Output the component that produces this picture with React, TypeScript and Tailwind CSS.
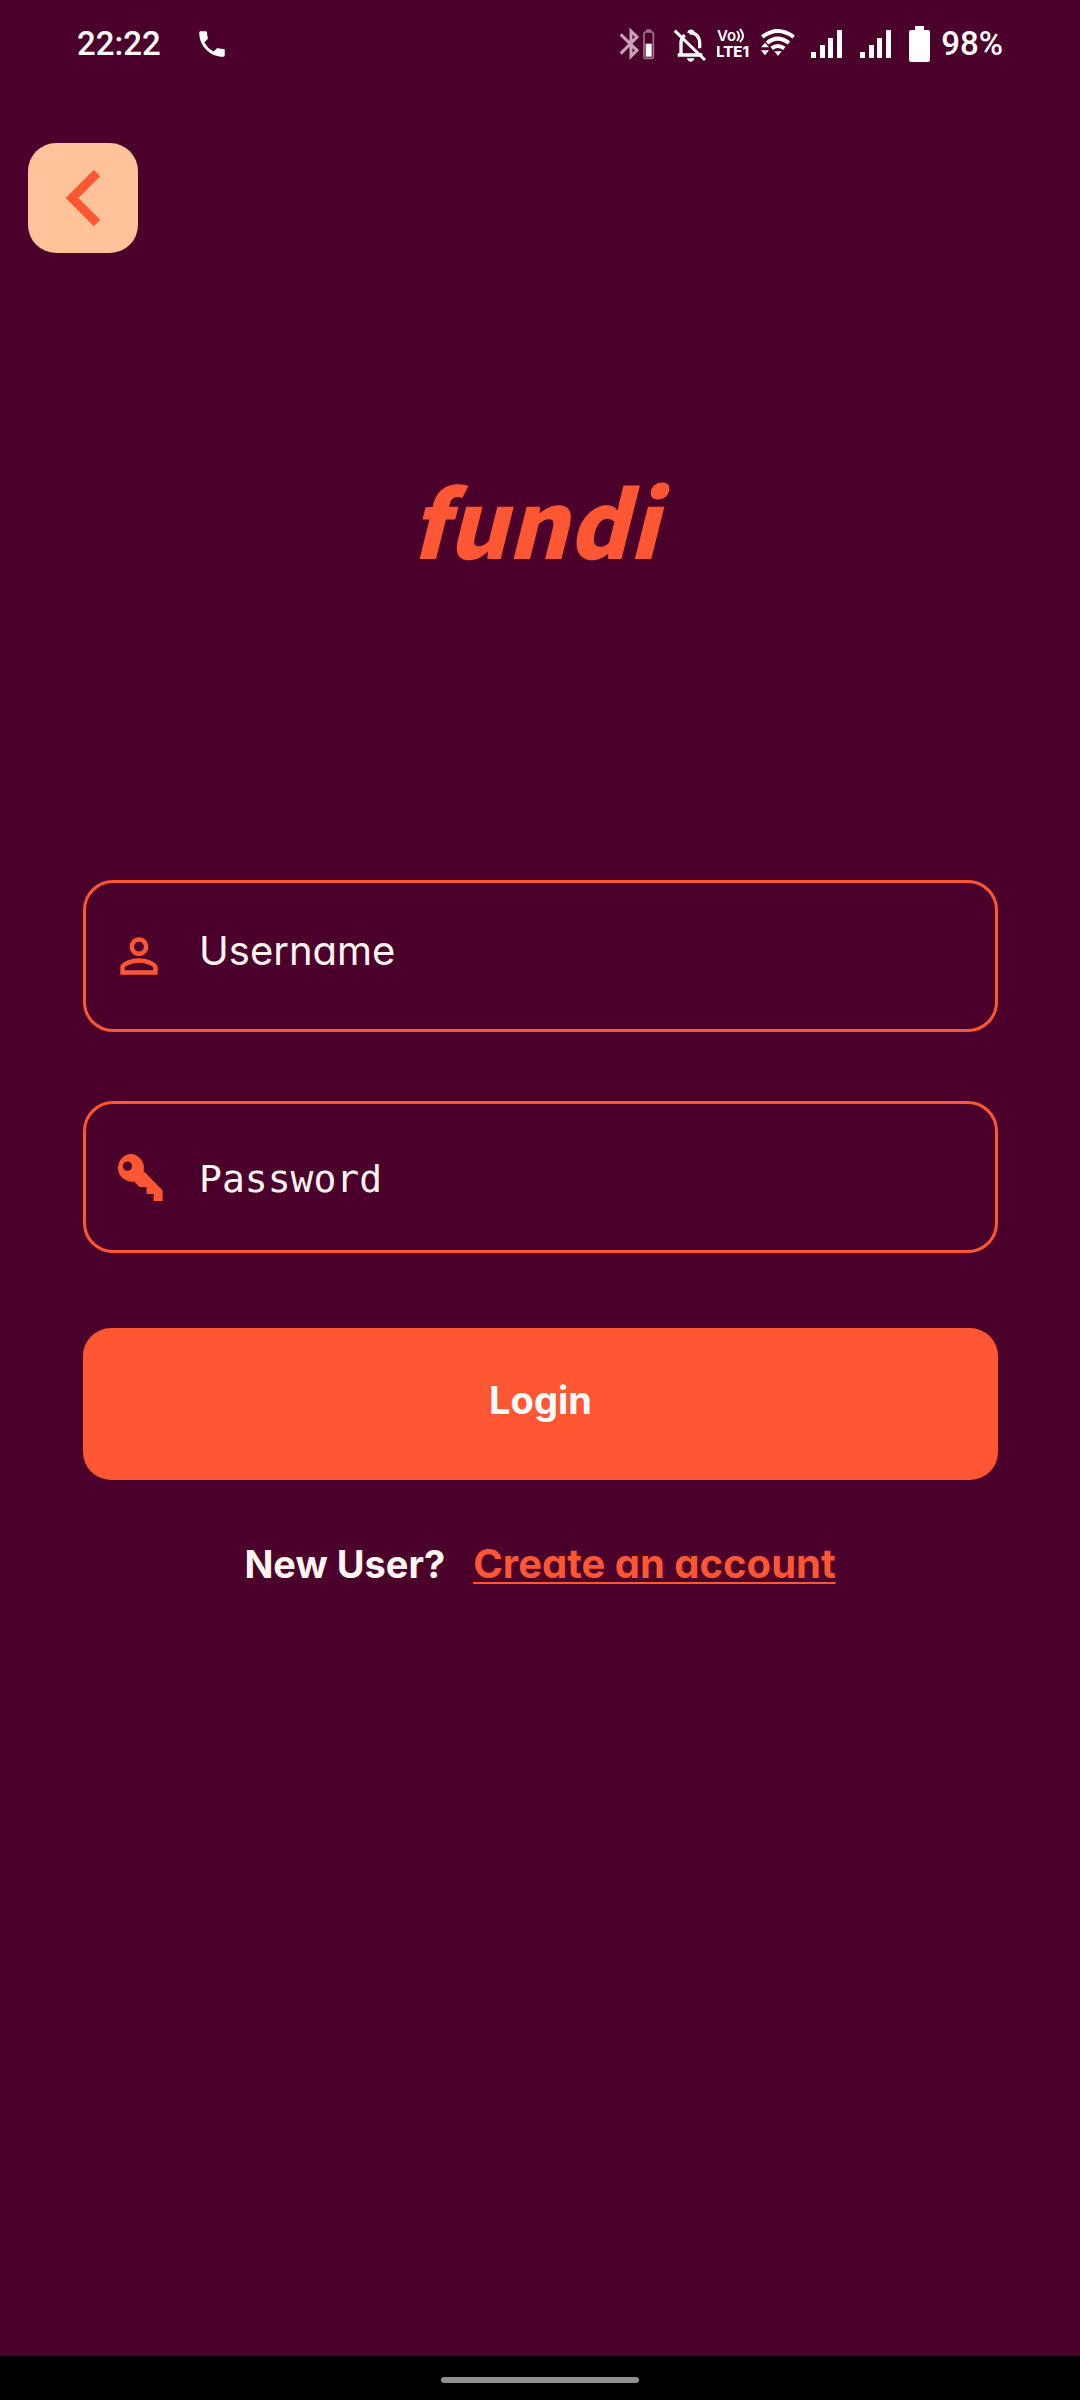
import React from "react";

const INTER = "font-['Inter',sans-serif] [font-feature-settings:'cv11']";

function StatusBar() {
  return (
    <header className="flex h-[88px] items-center px-[77px] font-['Roboto',sans-serif] text-[33px] font-medium leading-10 text-white">
      <span>22:22</span>
      <svg aria-label="Call" className="ml-[34px] h-[34px] w-[34px]" viewBox="0 0 24 24" fill="currentColor">
        <path d="M6.62 10.79c1.44 2.83 3.76 5.14 6.59 6.59l2.2-2.2c.27-.27.67-.36 1.02-.24 1.12.37 2.33.57 3.57.57.55 0 1 .45 1 1V20c0 .55-.45 1-1 1C10.61 21 3 13.39 3 4c0-.55.45-1 1-1h3.5c.55 0 1 .45 1 1 0 1.25.2 2.45.57 3.57.11.35.03.74-.25 1.02z" />
      </svg>
      <div className="ml-auto flex items-center">
        <svg aria-label="Bluetooth" className="mr-[18px] h-9 w-9" viewBox="0 0 108 108" fill="none">
          <g stroke="#c9a3ba" strokeWidth="9">
            <path d="M5 25 54 73 36 91V15L54 33 5 83" />
          </g>
          <rect x="75" y="18" width="28" height="79" rx="5" stroke="#a57490" strokeWidth="5" />
          <rect x="81" y="10" width="16" height="7" fill="#a57490" />
          <rect x="80" y="53" width="18" height="39" fill="white" />
        </svg>
        <svg aria-label="Muted" className="mr-[8px] h-9 w-9" viewBox="0 0 108 108" fill="none" stroke="white">
          <path d="M24 90V52c0-10 4-19 11-25M49 21c20-2 31 13 31 31v15M14 87H88" strokeWidth="10" />
          <path d="M43 21c0-14 22-14 22 0z" fill="white" stroke="none" />
          <path d="M42 97h22c-2 14-20 14-22 0z" fill="white" stroke="none" />
          <path d="M5 14 96 102" strokeWidth="9" />
        </svg>
        <svg aria-label="VoLTE" className="mr-[8px] h-9 w-9" viewBox="0 0 36 36" fill="white">
          <text x="0" y="15" className="font-['Inter',sans-serif] text-[15px] font-semibold">Vo</text>
          <path d="M20 5q4 5 0 10M23 3q6 7 0 13" fill="none" stroke="white" strokeWidth="2" />
          <text x="-1" y="31" className="font-['Inter',sans-serif] text-[15px] font-extrabold">LTE1</text>
        </svg>
        <svg aria-label="Wi-Fi" className="mr-[16px] h-9 w-[34px]" viewBox="0 0 102 108" fill="none" stroke="white">
          <path d="M4 33Q50 -3 98 33M18 51Q50 25 84 51" strokeWidth="12" />
          <path d="M32 67Q50 53 70 67" strokeWidth="12" />
          <path d="M0 64 12 50 24 64zM0 73 12 88 24 73zM40 76h22L51 90z" fill="white" stroke="none" />
        </svg>
        <Signal />
        <Signal />
        <svg aria-label="Battery" className="mr-[11px] h-9 w-[21px]" viewBox="0 0 21 36" fill="white">
          <path d="M6 0h9v4h4a2 2 0 0 1 2 2v28a2 2 0 0 1-2 2H2a2 2 0 0 1-2-2V6a2 2 0 0 1 2-2h4z" />
        </svg>
        <span>98%</span>
      </div>
    </header>
  );
}

function Signal() {
  return (
    <svg aria-label="Signal" className="mr-[18px] h-9 w-[31px]" viewBox="0 0 31 36" fill="white">
      <path d="M0 26h5v6H0zM9 19h5v13H9zM17 12h5v20h-5zM26 4h5v28h-5z" />
    </svg>
  );
}

function PersonIcon() {
  return (
    <svg className="h-14 w-14" viewBox="0 0 24 24" fill="currentColor" aria-hidden="true">
      <path d="M12 5.9a2.1 2.1 0 1 1 0 4.2 2.1 2.1 0 0 1 0-4.2m0 9c2.97 0 6.1 1.46 6.1 2.1v1.1H5.9V17c0-.64 3.13-2.1 6.1-2.1M12 4C9.79 4 8 5.79 8 8s1.79 4 4 4 4-1.79 4-4-1.79-4-4-4zm0 9c-2.67 0-8 1.34-8 4v3h16v-3c0-2.66-5.33-4-8-4z" />
    </svg>
  );
}

function KeyIcon() {
  return (
    <svg className="h-[47px] w-[47px]" viewBox="0 0 140 140" fill="currentColor" aria-hidden="true">
      <path
        fillRule="evenodd"
        d="M41 0a41 41 0 0 1 41 51l57 58v31h-27v-21H91V98H70L54 82A41 41 0 1 1 41 0zM34 22a14 14 0 1 0 0 28 14 14 0 0 0 0-28z"
      />
    </svg>
  );
}

type FieldProps = {
  id: string;
  type: string;
  label: string;
  icon: React.ReactNode;
  inputClass: string;
};

function Field({ id, type, label, icon, inputClass }: FieldProps) {
  return (
    <div className="flex h-[152px] items-center rounded-[30px] border-[3px] border-[#ff5733] pl-[25px] pr-8 text-[#ff5733]">
      <label htmlFor={id} className="mr-8 flex w-14 shrink-0 justify-center">
        {icon}
      </label>
      <input
        id={id}
        type={type}
        aria-label={label}
        placeholder={label}
        className={"h-full min-w-0 flex-1 bg-transparent text-[#fff5ee] outline-none placeholder:text-[#fff5ee] placeholder:opacity-100 " + inputClass}
      />
    </div>
  );
}

export default function App() {
  return (
    <div className={"flex min-h-screen flex-col bg-[#4b002c] " + INTER}>
      <StatusBar />
      <div className="px-7 pt-[55px]">
        <button type="button" aria-label="Back" className="flex h-[110px] w-[110px] items-center justify-center rounded-[28px] bg-[#ffc299]">
          <svg className="h-14 w-9 text-[#ff5733]" viewBox="0 0 36 56" fill="none" stroke="currentColor" strokeWidth="9">
            <path d="M32 3 7 28l25 25" />
          </svg>
        </button>
      </div>
      <h1 className="mt-[206px] pr-3 text-center font-['Noto_Sans_CJK_SC',sans-serif] text-[92px] font-black italic leading-[120px] text-[#ff5733]">
        fundi
      </h1>
      <form className="ml-[83px] mr-[82px] mt-[301px] flex flex-col gap-[69px]" onSubmit={(e) => e.preventDefault()}>
        <Field id="username" type="text" label="Username" icon={<PersonIcon />} inputClass="pb-3 text-[40px]" />
        <Field
          id="password"
          type="password"
          label="Password"
          icon={<KeyIcon />}
          inputClass="pt-1 font-['DejaVu_Sans_Mono',monospace] text-[38px]"
        />
        <button type="submit" className="mt-1.5 h-[152px] rounded-[28px] bg-[#ff5733] pb-2 text-[38px] font-bold text-white">
          Login
        </button>
      </form>
      <p className="mt-[60px] flex items-baseline justify-center gap-7 text-[38px] font-bold leading-[48px] text-[#fff5ee]">
        <span>New User?</span>
        <a href="#create" className="text-[40px] text-[#ff5733] underline decoration-2 underline-offset-4">
          Create an account
        </a>
      </p>
      <footer className="mt-auto flex h-11 items-center justify-center bg-black pt-1">
        <div className="h-1.5 w-[198px] rounded-full bg-[#909090]" />
      </footer>
    </div>
  );
}
